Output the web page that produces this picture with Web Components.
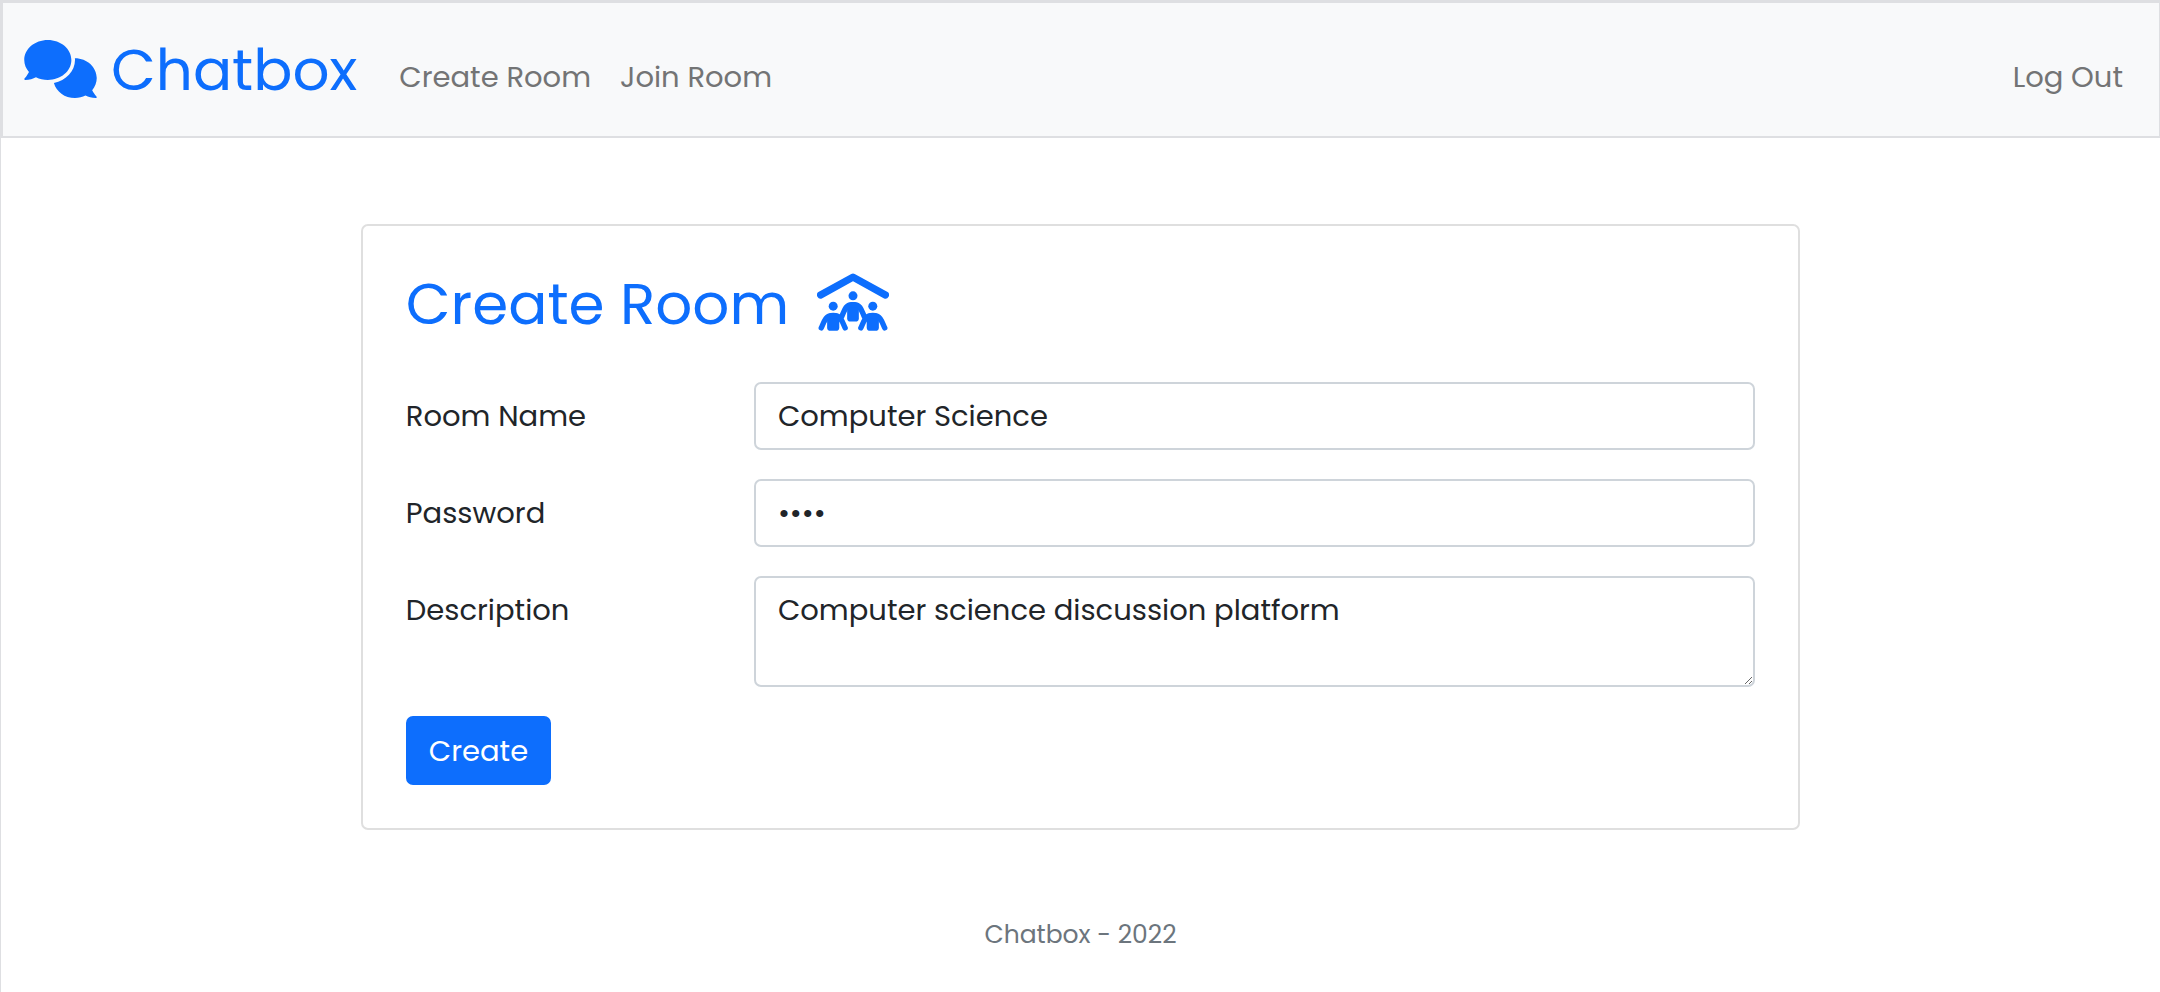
<!DOCTYPE html>
<html lang="en">
<head>
<meta charset="utf-8">
<title>Chatbox</title>
<style>
  body {
    margin: 0;
    font-family: Poppins, Inter, "Open Sans", sans-serif;
    font-size: 29px;
    line-height: 43px;
    color: #212529;
    background: #fff;
    --primary: #0d6efd;
    --muted: #6c757d;
    --edge: #dedfe2;
    --field-edge: #ced4da;
  }
</style>
</head>
<body>
<chat-app></chat-app>

<template id="chat-app">
  <style>
    :host { display: block; box-sizing: border-box; min-height: 100vh; border-left: 1px solid var(--edge); }
    main { padding-top: 86px; }
    room-card { width: 66.6667%; margin: 0 auto; }
    footer { margin-top: 83px; text-align: center; font-size: 25px; color: var(--muted); }
  </style>
  <site-nav>
    <nav-link href="#create">Create Room</nav-link>
    <nav-link href="#join">Join Room</nav-link>
    <nav-link slot="end" href="#logout">Log Out</nav-link>
  </site-nav>
  <main>
    <room-card heading="Create Room">
      <room-form></room-form>
    </room-card>
  </main>
  <footer>Chatbox - 2022</footer>
</template>

<template id="site-nav">
  <style>
    :host { display: block; background: #f8f9fa; border: 2px solid var(--edge); border-top-width: 3px; border-right-width: 1px; }
    nav { display: flex; align-items: center; min-height: 133px; padding: 0 36px 0 21px; box-sizing: border-box; }
    .brand { display: flex; align-items: center; gap: 14px; margin-right: 42px; font-size: 58px; line-height: 86px; color: var(--primary); text-decoration: none; }
    svg { width: 73px; height: 58px; margin-bottom: 2px; fill: currentColor; }
    .links { display: flex; flex: 1; gap: 29px; padding-top: 16px; }
    .end { display: flex; padding-top: 16px; }
  </style>
  <nav>
    <a class="brand" href="#home">
      <svg viewBox="0 0 640 512" aria-hidden="true"><path d="M416 176C416 78.8 322.9 0 208 0S0 78.8 0 176c0 39.57 15.62 75.96 41.67 105.4c-16.39 32.76-39.23 57.32-39.59 57.68c-2.1 2.205-2.67 5.475-1.441 8.354C1.9 350.3 4.602 352 7.66 352c38.35 0 70.76-11.12 95.74-24.04C134.2 343.1 169.8 352 208 352C322.9 352 416 273.2 416 176zM599.6 443.7C624.8 413.9 640 376.6 640 336C640 238.8 554 160 448 160c-.3145 0-.6191 .041-.9336 .043C447.5 165.3 448 170.6 448 176c0 98.62-79.68 181.2-186.1 202.5C282.7 455.1 357.1 512 448 512c33.69 0 65.32-8.008 92.85-21.98C565.2 502 596.1 512 632.3 512c3.059 0 5.76-1.725 7.02-4.605c1.229-2.879 .6582-6.148-1.441-8.354C637.6 498.7 615.9 475.3 599.6 443.7z"/></svg>
      <span>Chatbox</span>
    </a>
    <div class="links"><slot></slot></div>
    <div class="end"><slot name="end"></slot></div>
  </nav>
</template>

<template id="nav-link">
  <style>
    :host { display: block; }
    a { color: #737475; text-decoration: none; white-space: nowrap; }
  </style>
  <a><slot></slot></a>
</template>

<template id="room-card">
  <style>
    :host { display: block; box-sizing: border-box; padding: 43px; border: 2px solid #dfdfdf; border-radius: 7px; }
    header { display: flex; align-items: center; gap: 28px; margin-bottom: 43px; color: var(--primary); }
    h1 { margin: 0; font-size: 58px; line-height: 70px; font-weight: 400; }
    svg { width: 72px; height: 58px; margin-bottom: 4px; }
  </style>
  <header>
    <h1></h1>
    <svg viewBox="0 0 640 512" aria-hidden="true" fill="currentColor" stroke="currentColor" stroke-linecap="round" stroke-linejoin="round">
      <path d="M32 194 320 35 608 194" fill="none" stroke-width="64"/>
      <g stroke="none">
        <circle cx="320" cy="201" r="40"/>
        <circle cx="144" cy="293" r="40"/>
        <circle cx="496" cy="293" r="40"/>
        <path d="M268 300C278 272 296 255 320 255S362 272 372 300V400Q372 430 342 430H298Q268 430 268 400Z"/>
        <path d="M90 395Q90 352 144 352T198 395V482Q198 512 168 512H120Q90 512 90 482Z"/>
        <path d="M442 395Q442 352 496 352T550 395V482Q550 512 520 512H472Q442 512 442 482Z"/>
      </g>
      <g fill="none" stroke-width="48">
        <path d="M220 385C240 345 252 279 305 279H335C388 279 400 345 420 385"/>
        <path d="M38 486C60 440 76 377 126 377H162C212 377 228 440 250 486"/>
        <path d="M390 486C412 440 428 377 478 377H514C564 377 580 440 602 486"/>
      </g>
    </svg>
  </header>
  <slot></slot>
</template>

<template id="room-form">
  <style>
    :host { display: block; }
    .row { display: grid; grid-template-columns: repeat(12, minmax(0, 1fr)); column-gap: 43px; align-items: start; margin-bottom: 29px; }
    label { grid-column: span 3; padding: 13px 0 12px; }
    input, textarea {
      grid-column: span 9; display: block; box-sizing: border-box; width: 100%; margin: 0;
      padding: 11px 22px; border: 2px solid var(--field-edge); border-radius: 7px; background: #fff;
      font: inherit; color: inherit; outline: 0;
    }
    input { height: 68px; }
    textarea { height: 111px; }
    button {
      display: block; margin: 0; padding: 12px 21px 10px; border: 2px solid var(--primary); border-radius: 7px;
      background: var(--primary); color: #fff; font: inherit;
    }
  </style>
  <form>
    <div class="row"><label for="name">Room Name</label><input id="name" type="text" value="Computer Science"></div>
    <div class="row"><label for="password">Password</label><input id="password" type="password" value="1234" autocomplete="off"></div>
    <div class="row"><label for="description">Description</label><textarea id="description">Computer science discussion platform</textarea></div>
    <button type="button">Create</button>
  </form>
</template>

<script>
  class TemplateElement extends HTMLElement {
    constructor() {
      super();
      const template = document.getElementById(this.localName);
      this.attachShadow({ mode: 'open' }).append(template.content.cloneNode(true));
    }
  }
  customElements.define('nav-link', class extends TemplateElement {
    connectedCallback() {
      this.shadowRoot.querySelector('a').href = this.getAttribute('href');
    }
  });
  customElements.define('site-nav', class extends TemplateElement {});
  customElements.define('room-form', class extends TemplateElement {});
  customElements.define('room-card', class extends TemplateElement {
    connectedCallback() {
      this.shadowRoot.querySelector('h1').textContent = this.getAttribute('heading');
    }
  });
  customElements.define('chat-app', class extends TemplateElement {});
</script>
</body>
</html>
